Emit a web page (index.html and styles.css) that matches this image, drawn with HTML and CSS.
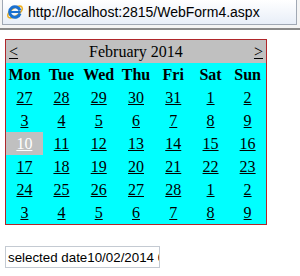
FILE: index.html
```html
<!DOCTYPE html>
<html>
<head>
<meta charset="utf-8">
<link rel="stylesheet" href="styles.css">
</head>
<body>
<div class="addr-bar">
  <div class="addr-box">
    <svg class="ie-icon" width="18" height="18" viewBox="0 0 18 18">
      <ellipse cx="9" cy="9" rx="8.5" ry="4" fill="none" stroke="#f0b020" stroke-width="1.6" transform="rotate(-35 9 9)"/>
      <path d="M14 10.5 A5.3 5.3 0 1 1 14 7.5" fill="none" stroke="#1a70d0" stroke-width="3"/>
      <rect x="5" y="8" width="9.5" height="2" fill="#1a70d0"/>
    </svg>
    <span class="addr-text">http://localhost:2815/WebForm4.aspx</span>
  </div>
</div>
<div class="page">
  <table class="cal">
    <tr class="title-row">
      <td class="nav prev"><a href="#">&lt;</a></td>
      <td class="month" colspan="5">February 2014</td>
      <td class="nav next"><a href="#">&gt;</a></td>
    </tr>
    <tr class="dow">
      <th>Mon</th><th>Tue</th><th>Wed</th><th>Thu</th><th>Fri</th><th>Sat</th><th>Sun</th>
    </tr>
    <tr><td><a href="#">27</a></td><td><a href="#">28</a></td><td><a href="#">29</a></td><td><a href="#">30</a></td><td><a href="#">31</a></td><td><a href="#">1</a></td><td><a href="#">2</a></td></tr>
    <tr><td><a href="#">3</a></td><td><a href="#">4</a></td><td><a href="#">5</a></td><td><a href="#">6</a></td><td><a href="#">7</a></td><td><a href="#">8</a></td><td><a href="#">9</a></td></tr>
    <tr><td class="sel"><a href="#">10</a></td><td><a href="#">11</a></td><td><a href="#">12</a></td><td><a href="#">13</a></td><td><a href="#">14</a></td><td><a href="#">15</a></td><td><a href="#">16</a></td></tr>
    <tr><td><a href="#">17</a></td><td><a href="#">18</a></td><td><a href="#">19</a></td><td><a href="#">20</a></td><td><a href="#">21</a></td><td><a href="#">22</a></td><td><a href="#">23</a></td></tr>
    <tr><td><a href="#">24</a></td><td><a href="#">25</a></td><td><a href="#">26</a></td><td><a href="#">27</a></td><td><a href="#">28</a></td><td><a href="#">1</a></td><td><a href="#">2</a></td></tr>
    <tr><td><a href="#">3</a></td><td><a href="#">4</a></td><td><a href="#">5</a></td><td><a href="#">6</a></td><td><a href="#">7</a></td><td><a href="#">8</a></td><td><a href="#">9</a></td></tr>
  </table>
  <div class="field"><span class="field-text">selected date10/02/2014 00:00:00</span></div>
</div>
</body>
</html>
```
FILE: styles.css
```css
html, body {
  margin: 0;
  padding: 0;
  background: #ffffff;
}
.addr-bar {
  height: 28px;
  border-bottom: 2px solid #8a8a8a;
  box-sizing: content-box;
  background: #f4f4f4;
  padding: 0 3px 0 2px;
}
.addr-box {
  height: 25px;
  box-sizing: border-box;
  border-left: 1px solid #a0a8b4;
  border-right: 1px solid #a0a8b4;
  border-bottom: 1px solid #a0a8b4;
  background: linear-gradient(#ffffff, #e8eef8);
  display: flex;
  align-items: center;
  padding-left: 3px;
  gap: 4px;
}
.ie-icon {
  display: block;
  flex: none;
}
.addr-text {
  font-family: "Liberation Sans", Arial, sans-serif;
  font-size: 14px;
  color: #000;
}
.page {
  padding: 9px 0 0 5px;
}
.cal {
  border-collapse: collapse;
  border: 1px solid #b0262a;
  background: #00ffff;
  width: 262px;
  font-family: "Liberation Serif", "Times New Roman", serif;
  font-size: 16px;
  color: #000;
  table-layout: fixed;
}
.cal td, .cal th {
  padding: 0;
  height: 23px;
  text-align: center;
  vertical-align: middle;
  line-height: 18px;
}
.cal a {
  color: #000;
  text-decoration: underline;
}
.title-row td {
  background: #c0c0c0;
}
.nav.prev {
  text-align: left;
  padding-left: 3px;
}
.nav.next {
  text-align: right;
  padding-right: 3px;
}
.month {
  text-align: center;
}
.dow th {
  font-weight: bold;
}
.cal td.sel {
  background: #c0c0c0;
}
.cal td.sel a {
  color: #ffffff;
}
.field {
  margin-top: 21px;
  width: 155px;
  height: 22px;
  box-sizing: border-box;
  border: 1px solid #c4cad2;
  overflow: hidden;
  white-space: nowrap;
  display: flex;
  align-items: center;
  padding-left: 2px;
}
.field-text {
  font-family: "Liberation Sans", Arial, sans-serif;
  font-size: 13.33px;
  color: #000;
}
```
